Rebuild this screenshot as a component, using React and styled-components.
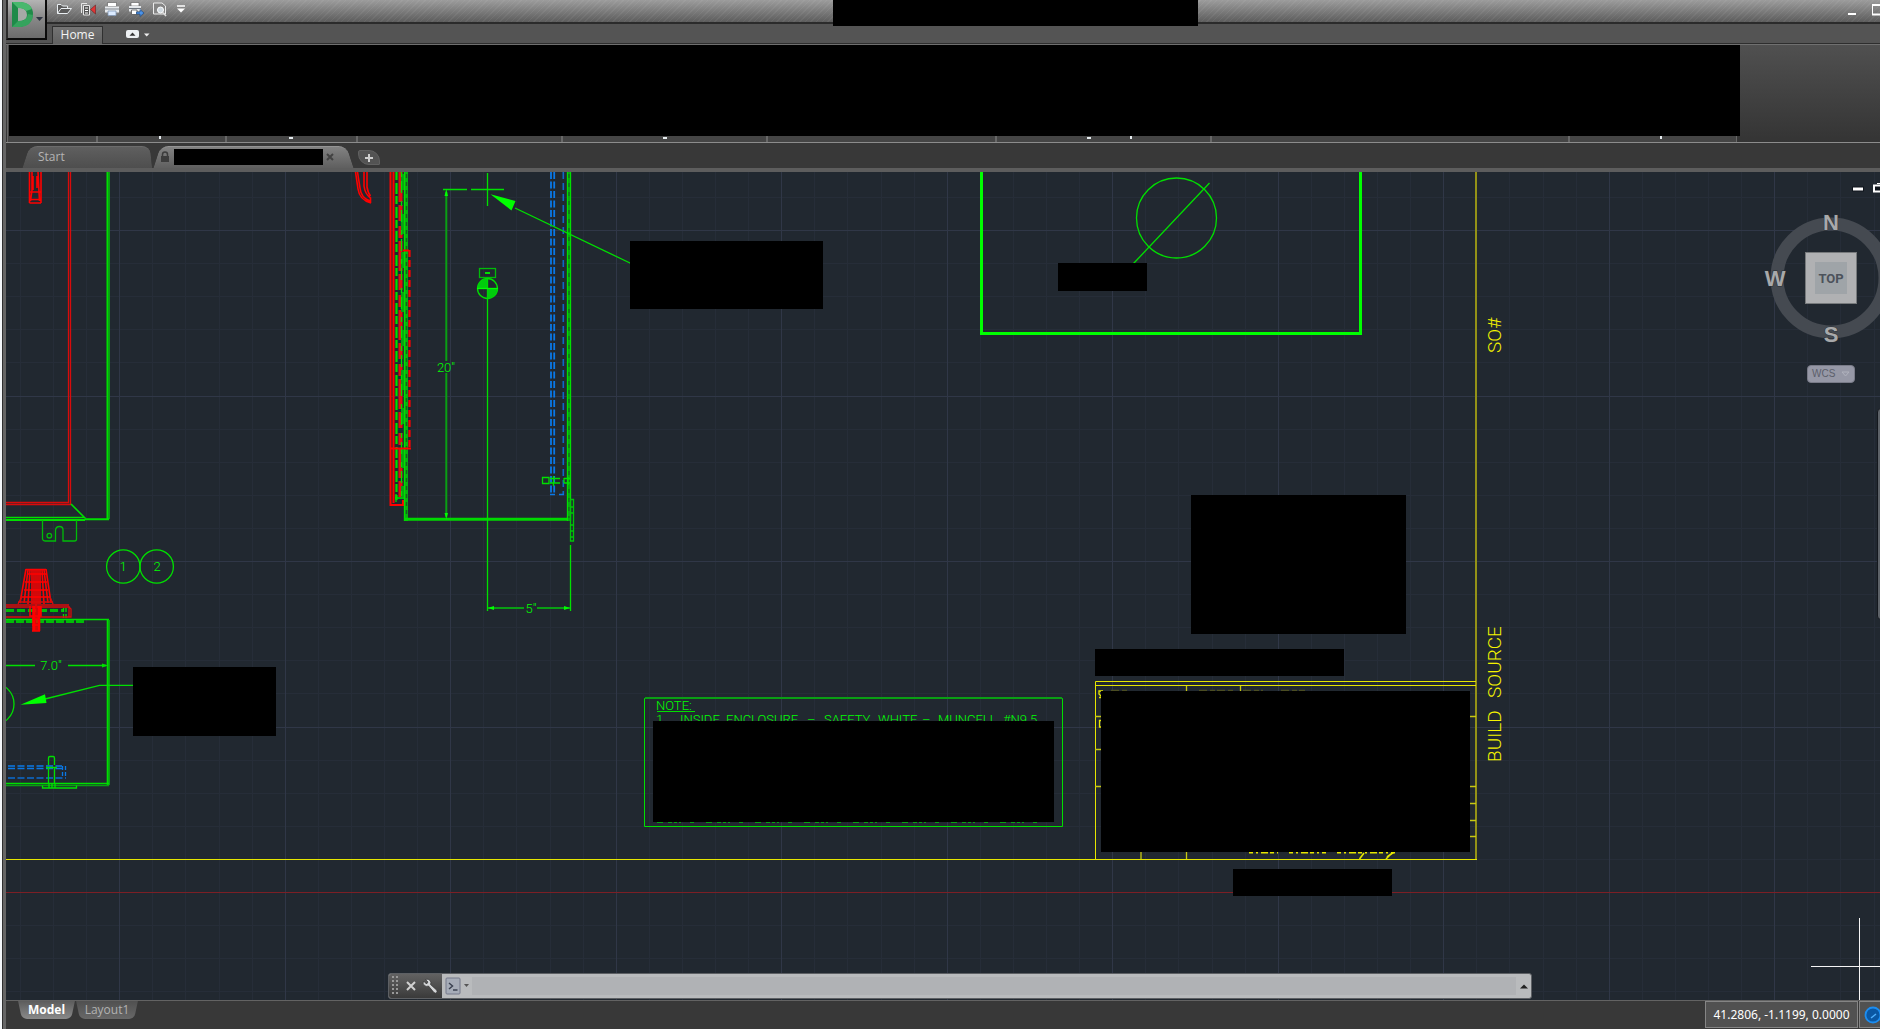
import React from "react";
import styled, { createGlobalStyle } from "styled-components";

const GlobalStyle = createGlobalStyle`
  * { box-sizing: border-box; }
  html, body { margin: 0; height: 100%; overflow: hidden; background: #383838; }
  #root { height: 100%; }
  button, input { font: inherit; color: inherit; border: 0; padding: 0; margin: 0; background: none; }
`;

const ui = `"Open Sans", "Noto Sans", sans-serif`;
const cad = `Roboto, "Liberation Sans", sans-serif`;

const Window = styled.div`
  display: flex;
  height: 100vh;
  overflow: hidden;
  font-family: ${ui};
  background: #383838;
`;

const DesktopEdge = styled.div`
  flex: 0 0 6px;
  border-right: 3px solid #666666;
  background: linear-gradient(90deg, #f4f7fa 0 2px, #303030 2px 3px);
`;

const Shell = styled.div`
  position: relative;
  flex: 1;
  min-width: 0;
  display: flex;
  flex-direction: column;
`;

const TitleBar = styled.header`
  flex: 0 0 24px;
  display: flex;
  justify-content: space-between;
  padding-left: 49px;
  border-bottom: 2px solid #2b2b2b;
  background:
    repeating-linear-gradient(135deg, rgba(255, 255, 255, 0.05) 0 1px, transparent 1px 4px),
    linear-gradient(#9c9c9c, #5c5c5c);
`;

const QuickAccess = styled.nav`
  display: flex;
  align-items: center;
  gap: 6px;
  height: 18px;
`;

const QuickButton = styled.button`
  width: ${(p) => (p.$narrow ? 12 : 18)}px;
  height: 18px;
  display: grid;
  place-items: center;
`;

const TitleCover = styled.div`
  position: absolute;
  left: 827px;
  top: 0;
  width: 365px;
  height: 26px;
  background: #000;
`;

const WindowControls = styled.div`
  display: flex;
  gap: 8px;
  margin-right: -12px;
`;

const WindowButton = styled.button`
  width: 20px;
  height: 20px;
`;

const RibbonTabs = styled.div`
  flex: 0 0 20px;
  display: flex;
  align-items: flex-end;
  gap: 22px;
  padding-left: 46px;
  background: #545454;
  border-bottom: 1px solid #2e2e2e;
`;

const RibbonTab = styled.button`
  width: 51px;
  height: 18px;
  margin-bottom: -1px;
  border: 1px solid #303030;
  border-bottom: 0;
  background: linear-gradient(#747474, #616161);
  color: #f4f4f4;
  font: 12px/14px ${ui};
  padding-bottom: 2px;
`;

const MinimizeRibbon = styled.button`
  width: 26px;
  height: 17px;
  svg { display: block; }
`;

const Ribbon = styled.section`
  flex: 0 0 98px;
  position: relative;
  display: flex;
  align-items: flex-end;
  padding-left: 1px;
  border-top: 1px solid #707070;
  background: linear-gradient(#505050, #343434);
`;

const RibbonPanel = styled.div`
  width: ${(p) => p.$width}px;
  height: 97px;
  flex: none;
  border: solid #686868;
  border-width: 0 1px;
  background: #454545;
`;

const RibbonCover = styled.div`
  position: absolute;
  left: 3px;
  top: 0;
  width: 1731px;
  height: 91px;
  background: #000;
`;

const LabelTail = styled.i`
  position: absolute;
  left: ${(p) => p.$left}px;
  bottom: 3px;
  width: ${(p) => (p.$wide ? 4 : 2)}px;
  height: ${(p) => (p.$wide ? 2 : 3)}px;
  background: #e6ecef;
`;

const FileTabs = styled.nav`
  flex: 0 0 30px;
  display: flex;
  align-items: flex-end;
  padding-left: 20px;
  border-top: 1px solid #8c8c8c;
  border-bottom: 4px solid #5d5d5d;
  background: #383838;
`;

const FileTab = styled.div`
  position: relative;
  z-index: 0;
  width: ${(p) => p.$width}px;
  height: 22px;
  display: flex;
  align-items: center;
  padding: 0 ${(p) => (p.$active ? 4 : 12)}px;
  font: 12px/20px ${ui};
  color: #b4b4b4;
  margin-right: 6px;
  &::before, &::after {
    content: "";
    position: absolute;
    z-index: -1;
    top: 0;
    bottom: 0;
    background: ${(p) => (p.$active ? "linear-gradient(#828282, #5f5f5f)" : "linear-gradient(#5f5f5f, #4e4e4e)")};
    border-top: 1px solid ${(p) => (p.$active ? "#949494" : "#6c6c6c")};
  }
  &::before { left: 0; right: 30px; transform: skewX(-18deg); border-radius: 8px 0 0 0; }
  &::after { right: 0; left: 24px; transform: skewX(${(p) => (p.$active ? 18 : 6)}deg); border-radius: 0 8px 0 0; }
`;

const TabButton = styled.button`
  flex: 1;
  height: 20px;
  display: flex;
  align-items: center;
  gap: 5px;
  text-align: left;
`;

const NameCover = styled.span`
  width: 149px;
  height: 16px;
  background: #000;
`;

const CloseButton = styled.button`
  width: 12px;
  height: 16px;
  display: grid;
  place-items: center;
  margin-right: 10px;
`;

const AddTab = styled.button`
  width: 22px;
  height: 15px;
  margin: 0 0 3px 2px;
  display: grid;
  place-items: center;
  border: 1px solid #606060;
  border-radius: 2px 11px 1px 11px;
  background: #535353;
`;

const Canvas = styled.main`
  position: relative;
  flex: 1;
  min-height: 0;
  overflow: hidden;
  background: #212830;
`;

const Drawing = styled.svg`
  position: absolute;
  inset: 0;
  width: 100%;
  height: 100%;
  font-family: ${cad};
  font-weight: 300;
`;

const ViewTools = styled.aside`
  position: absolute;
  top: 10px;
  right: -14px;
  width: 126px;
  display: flex;
  flex-direction: column;
  align-items: center;
`;

const ViewControls = styled.div`
  align-self: stretch;
  display: flex;
  gap: 8px;
  height: 17px;
  padding-left: 83px;
`;

const ViewButton = styled.button`
  width: 14px;
  height: 14px;
  svg { display: block; }
`;

const Cube = styled.svg`
  display: block;
  overflow: visible;
  font-family: "Liberation Sans", sans-serif;
  font-weight: bold;
`;

const WcsButton = styled.button`
  display: flex;
  align-items: center;
  justify-content: space-between;
  width: 48px;
  height: 18px;
  margin-top: 14px;
  padding: 0 4px;
  border: 1px solid #797b88;
  border-radius: 4px;
  background: #9698a6;
  color: #5c5f6b;
  font: 10px/16px "Liberation Sans", sans-serif;
`;

const NavigationBar = styled.div`
  position: absolute;
  top: 236px;
  right: -20px;
  width: 23px;
  height: 212px;
  border: 1px solid #14181e;
  border-radius: 4px;
  background: #5d6268;
`;

const CommandLine = styled.form`
  position: absolute;
  left: 382px;
  right: 348px;
  bottom: 1px;
  height: 26px;
  display: flex;
  border: 1px solid #5d6064;
  border-radius: 3px;
  overflow: hidden;
  background: #b9bbbd;
`;

const CommandTools = styled.div`
  flex: 0 0 53px;
  display: flex;
  align-items: center;
  gap: 8px;
  padding-left: 3px;
  background: linear-gradient(#626262, #3a3a3a);
  svg { flex: none; }
`;

const CommandButton = styled.button`
  display: grid;
  place-items: center;
  flex: none;
  width: ${(p) => p.$width}px;
  height: 24px;
`;

const CommandInput = styled.input`
  flex: 1;
  min-width: 0;
  align-self: center;
  height: 18px;
  background: #b0b2b5;
`;

const Footer = styled.footer`
  flex: 0 0 29px;
  display: flex;
  justify-content: space-between;
  border-top: 1px solid #636363;
  background: #383838;
  overflow: hidden;
`;

const LayoutTabs = styled.nav`
  display: flex;
  gap: 5px;
  padding-left: 14px;
`;

const LayoutTab = styled.button`
  position: relative;
  z-index: 0;
  height: 18px;
  width: ${(p) => p.$width}px;
  color: ${(p) => (p.$active ? "#ffffff" : "#b2b2b2")};
  font: ${(p) => (p.$active ? "bold" : "normal")} 12px/18px ${ui};
  &::before, &::after {
    content: "";
    position: absolute;
    z-index: -1;
    top: 0;
    bottom: 0;
    background: ${(p) => (p.$active ? "linear-gradient(#5c5c5c, #8a8a8a)" : "linear-gradient(#505050, #686868)")};
  }
  &::before { left: 0; right: 16px; transform: skewX(12deg); border-radius: 0 0 0 5px; }
  &::after { right: 0; left: 16px; transform: skewX(-12deg); border-radius: 0 0 5px 0; }
`;

const Status = styled.div`
  display: flex;
  gap: 1px;
  margin-right: -11px;
`;

const StatusCell = styled.button`
  height: 27px;
  width: ${(p) => p.$width}px;
  border: 1px solid #858585;
  background: #515151;
  color: #fff;
  font: 12px/24px "Noto Sans", sans-serif;
  white-space: nowrap;
  svg { display: block; margin-left: 4px; }
`;

const AppMenuSlot = styled.div`
  position: absolute;
  left: 0;
  top: 0;
`;

const AppButton = styled.button`
  display: block;
  width: 41px;
  height: 40px;
  border: 2px solid #0c0c0c;
  border-top: 0;
  border-left-color: #2a2a2a;
  background: linear-gradient(#b4b4b4, #8a8a8a 45%, #6c6c6c);
  svg { display: block; }
`;

const G = "#00e000";
const BG = "#00ff00";
const DG = "#0a9e14";
const Y = "#e6e600";
const DY = "#949217";
const R = "#ff0000";
const B = "#0a78e6";

const range = (n) => Array.from({ length: n }, (_, i) => i);

function Grid() {
  const step = 33.1;
  const draw = (major) => {
    let d = "";
    range(90).forEach((i) => {
      if ((i % 5 === 0) !== major) return;
      d += `M${Math.round(119.2 + (i - 5) * step) + 0.5} 172V1600`;
      if (i < 60) d += `M0 ${Math.round(230 + (i - 5) * step) + 0.5}H3200`;
    });
    return d;
  };
  return (
    <g fill="none">
      <path d={draw(false)} stroke="#262d38" />
      <path d={draw(true)} stroke="#303747" />
    </g>
  );
}

function LeftParts() {
  return (
    <g fill="none" strokeWidth="1.3">
      <g stroke={R} strokeWidth="1.6">
        <path d="M29.500 172V203M32 172V190L30.500 201M38 172L39.500 201M41 172V203M33 176V190M37 176V188M29.500 192H41M31 199.500H39.500M29.500 203H41" />
        <path d="M68.500 172V502.500H6M70.500 172V504.500H6" stroke="#d90b0b" strokeWidth="1.300" />
      </g>
      <path d="M109 172V519" stroke={DG} strokeWidth="2" />
      <path d="M107.300 172V519" stroke={G} strokeWidth="1.600" />
      <path d="M6 517.500H85M71 504L85.500 518.500" stroke={G} strokeWidth="1.600" />
      <path d="M6 520H85M85 519.300H109" stroke={G} strokeWidth="2" />
      <path d="M42.500 520V539Q43 541 45 541H55.500V530Q56 526.500 59.500 526.500T63 530V541H74.500Q76.500 541 76.500 539V520" stroke="#00bc08" />
      <circle cx="49.300" cy="535.700" r="2.300" stroke="#00bc08" />
      <circle cx="123.300" cy="566.500" r="16.700" stroke={G} />
      <circle cx="156.700" cy="566.500" r="16.700" stroke={G} />

      <g stroke={G}>
        <path d="M6 610.500H64" stroke="#00bc08" strokeWidth="3" strokeDasharray="8 3" />
        <path d="M6 619.500H109" />
        <path d="M6 621.500H86" stroke="#00bc08" strokeWidth="3" strokeDasharray="8 2" />
        <path d="M63.500 608V620M66 608V618" strokeDasharray="4 2" />
      </g>
      <g stroke={R} strokeWidth="1.600">
        <path d="M26 569.500H46M26 569L20 603M46 569L51 603M28 570L24 603M44 570L48 603M30 570L28 604M42 570L44 604M32 569V604M34 569V604M36 569V631M38 569V604M40 569V604M27 574H46M25 582H47M24 590H48M22 597H50" />
        <path d="M22 597L18 604M50 597L53 604M18 602H53M6 605H69M6 607H69L71 609V617H6M69 606V617" stroke="#d90b0b" strokeWidth="1.300" />
        <path d="M30 606V616H41V606M33 606V631M34.500 606V631M38 606V631M39.500 606V631M32 631H40M32 619H40M32 625H40" />
      </g>
      <path d="M109 620V785" stroke={DG} strokeWidth="2" />
      <path d="M107.500 620V785M6 783.500H109" stroke={G} strokeWidth="1.600" />
      <path d="M6 785.500H109" stroke={DG} />
      <path d="M6 665.500H35M68 665.500H106" stroke={G} />
      <path d="M102 663.500L108 665.500L102 667.500Z" fill={G} />
      <path d="M45 699L99.500 685.300H133" stroke={G} />
      <path d="M20.500 704.800L45 694.300L46.500 703Z" fill={BG} />
      <circle cx="-7" cy="704" r="21" stroke={G} />
      <g stroke={B}>
        <path d="M8 766H62M8 768.500H62" strokeWidth="1.600" strokeDasharray="7 2.500" />
        <path d="M8 778H66" stroke="#105aa8" strokeWidth="1.800" strokeDasharray="7 2.500" />
        <path d="M62.500 766V778M65.500 766V778" strokeDasharray="4 2" />
      </g>
      <path d="M48.500 765V758Q48.500 756.500 50 756.500H53Q54.500 756.500 54.500 758V765M46 767.500H57M48.500 768V784M54.500 768V784M42.500 785.500V788H76.500V785.500M49 783V788M52 783V788M55 783V788" stroke={G} />
    </g>
  );
}

function CenterParts() {
  return (
    <g fill="none" strokeWidth="1.300">
      <path d="M355.500 172L358 189Q359.500 200 371 203M357.500 172L360 188Q361 198 370 201M364 172V186Q365 194 370.500 198V203M367 172V187Q368 193 370.500 196" stroke={R} strokeWidth="1.600" />
      <path d="M390.500 172V505H403V500M393.500 172V503" stroke={R} strokeWidth="2" />
      <path d="M396.500 172V500" stroke={G} strokeWidth="2.200" strokeDasharray="8 3 11 2" />
      <path d="M400.500 172V498" stroke="#e01010" strokeWidth="4" strokeDasharray="30 3 16 5 12 3" />
      <path d="M402.500 174V497" stroke={DG} strokeWidth="3" strokeDasharray="16 24 20 18" />
      <path d="M401.500 172V497" stroke={G} strokeDasharray="5 4 12 8" />
      <path d="M406 172V521" stroke="#08b010" strokeWidth="4" />
      <path d="M404.500 172V521" stroke={G} />
      <path d="M406.500 174V518" stroke="#17601f" strokeWidth="1.500" strokeDasharray="4 4" />
      <path d="M409.500 250V450" stroke={R} strokeWidth="2.200" strokeDasharray="7 3" />
      <path d="M390 448.500H411M403 250.500H409" stroke={R} strokeWidth="1.800" />
      <path d="M395 498H405M396 494V502" stroke={G} />
      <path d="M404 519.300H570" stroke="#00d800" strokeWidth="3" />
      <path d="M569 172V521" stroke={DG} strokeWidth="3.500" />
      <path d="M567.500 172V521M570.500 172V521" stroke={G} />
      <path d="M569 174V518" stroke="#17601f" strokeDasharray="4 5" />
      <g stroke={B}>
        <path d="M551 172V495M554.200 172V495" strokeWidth="1.800" strokeDasharray="7 2.500" />
        <path d="M563.300 172V495" stroke="#0d68c6" strokeWidth="1.600" strokeDasharray="7 4" />
        <path d="M550 494.500H564" strokeDasharray="5 4" />
      </g>
      <path d="M542.500 477.500H549V483.500H542.500ZM550 478.500H560M550 483H560M553.500 476V486M564 478.500H570M564 483H570M564 478V483M568 477V485" stroke={G} />
      <path d="M570.500 499.500H573.500V541H570.500ZM571 507H573M571 513H573M571 525H573M571 531H573M571 537H573" stroke="#00c408" />

      <path d="M446.300 192V361M446.300 373V517" stroke={DG} strokeWidth="2" />
      <path d="M443 189.500H467M471 189.500H504M487.500 173V206M487.500 278V611M570.500 545V611" stroke={G} />
      <path d="M446.300 189L448 196H444.500ZM446.300 519L448 513H444.500Z" fill={BG} />
      <path d="M515 208L631 263.500" stroke={G} />
      <path d="M490.500 194.300L515.500 201L511.500 210.500Z" fill={BG} />
      <rect x="479.500" y="268.500" width="16" height="9" stroke="#00bc08" />
      <path d="M485 273H490" stroke={G} strokeWidth="2" />
      <circle cx="487.500" cy="288.500" r="10" stroke={G} />
      <path d="M487.500 288.500V278.500A10 10 0 0 0 477.500 288.500ZM487.500 288.500V298.500A10 10 0 0 0 497.500 288.500Z" fill="#00cc0c" />
      <path d="M477 288.500H498" stroke={BG} />
      <path d="M488 608H524M537 608H570" stroke={DG} strokeWidth="2" />
      <path d="M488 608L494 606V610ZM570 608L564 606V610Z" fill={BG} />
    </g>
  );
}

function RightParts() {
  return (
    <g fill="none" strokeWidth="1.300">
      <path d="M981.500 172V333.500H1360.500V172" stroke={BG} strokeWidth="3" />
      <circle cx="1176.500" cy="218" r="40" stroke={G} />
      <path d="M1133.500 263.500L1209.500 183" stroke={G} />
      <path d="M1476 172V859" stroke={DY} strokeWidth="2" />
      <path d="M6 859.500H1477M1095.500 859V681.500H1476M1095.500 685.500H1476" stroke={Y} strokeWidth="1" />
      <path d="M1186.500 686V859M1240.500 686V692M1141 852V859M1095 716.500H1102M1095 749.500H1102M1095 786.500H1102M1469 716.500H1476M1469 786.500H1476M1469 803.500H1476M1469 820.500H1476M1469 836.500H1476" stroke="#c8c812" />
      <path d="M1103 691H1099V694L1102 697M1099 697.500H1102M1102 720.500H1099.500V727H1102" stroke={Y} />
      <path d="M1111 690.500H1129M1199 690.500H1233M1243 690.500H1263M1281 690.500H1305" stroke="#4b4d22" strokeDasharray="8 3 5 2" />
      <path d="M1249 852.500H1278M1289 852.500H1326M1337 852.500H1395" stroke={Y} strokeWidth="2" strokeDasharray="4 3 2 3 7 2" />
      <path d="M1364 853L1359.500 859M1392 853L1386 859M1394 852L1387 857" stroke={Y} strokeWidth="1.600" />
    </g>
  );
}

const covers = [
  [630, 241, 193, 68],
  [1058, 263, 89, 28],
  [1191, 495, 215, 139],
  [1095, 649, 249, 27],
  [1101, 691, 369, 161],
  [1233, 869, 159, 27],
  [653, 721, 401, 101],
  [133, 667, 143, 69],
];

const noteLine = [
  [656, "1."], [680, "INSIDE"], [726, "ENCLOSURE"], [807, "–"], [824, "SAFETY"],
  [878, "WHITE"], [922, "–"], [938, "MUNCELL"], [1003, "#N9.5"],
];

function Sheet() {
  return (
    <Drawing role="img" aria-label="Enclosure drawing">
      <g transform="translate(-6 -172)">
        <Grid />
        <path d="M0 892.500H3200" stroke="#7c1f25" />
        <LeftParts />
        <CenterParts />
        <RightParts />
        <path d="M644.500 698.500H1062.500V826.500H644.500Z" fill="none" stroke={G} />
        <path d="M645 698H1062" stroke={DG} strokeWidth="2" />
        <path d="M657 711.500H695" stroke={G} />
        <path d="M657 822.500H1046" stroke={DG} strokeDasharray="6 5 4 2 3 2 2 9 4 12" />
        <g fill={BG} fontSize="13">
          <text x="656" y="710">NOTE:</text>
          <text y="724">
            {noteLine.map(([x, word]) => <tspan key={x} x={x}>{word}</tspan>)}
          </text>
          <text x="123" y="571" textAnchor="middle">1</text>
          <text x="157" y="571" textAnchor="middle">2</text>
          <text x="51" y="670" textAnchor="middle">7.0"</text>
          <text x="446" y="372" textAnchor="middle">20"</text>
          <text x="531" y="613" textAnchor="middle">5"</text>
        </g>
        <g fill="#f4f400" fontSize="19">
          <text transform="translate(1501 353) rotate(-90)">SO#</text>
          <text transform="translate(1501 762) rotate(-90)">BUILD</text>
          <text transform="translate(1501 698) rotate(-90)">SOURCE</text>
        </g>
        {covers.map(([x, y, w, h]) => <rect key={`${x}-${y}`} x={x} y={y} width={w} height={h} fill="#000" />)}
        <path d="M1859.500 918V1000M1811 966.500H1960" stroke="#f5f5f5" />
      </g>
    </Drawing>
  );
}

const quickIcons = [
  ["Open", <path key="a" d="M1.500 12.500V3.500H5L6.500 5H11.500V7M1.500 12.500L5 7.500H15.500L11.500 12.500Z" fill="#5a5a5a" stroke="#e9eef2" />],
  ["Import", <g key="b"><path d="M1.500 2.500H7M1.500 2.500V12M3.500 4.500H9.500V14H3.500Z" fill="#555" stroke="#e6e6e6" /><path d="M5 7H8M5 9.500H8M5 12H8" stroke="#fff" /><path d="M10.500 8.500L15.500 4V13Z" fill="#e03434" stroke="#5b1717" strokeWidth=".5" /></g>],
  ["Plot", <g key="c"><path d="M3.500 1.500H12.500V5.500H3.500Z" fill="#fff" stroke="#555" strokeWidth=".6" /><path d="M1 5.500H15V11.500H1Z" fill="#e6e9ec" /><path d="M1 8H15" stroke="#7e858d" /><path d="M4 10H12V14.500H4Z" fill="#dcebff" stroke="#8197b4" strokeWidth=".8" /></g>],
  ["Batch Plot", <g key="d"><path d="M3 1.500H11V5H3Z" fill="#fff" stroke="#555" strokeWidth=".6" /><path d="M1 5H13V10.500H1Z" fill="#e3e6e9" /><path d="M1 7.500H13" stroke="#6d747c" /><path d="M3.500 9H9V13.500H3.500Z" fill="#fff" stroke="#555" strokeWidth=".8" /><path d="M8.500 11H12V8.500L16 12L12 15.500V13H8.500Z" fill="#4c93e8" stroke="#214a83" strokeWidth=".7" /></g>],
  ["Plot Preview", <g key="e"><path d="M1.500 2H10L13.500 5V13H1.500Z" fill="#858585" stroke="#ececec" /><circle cx="8.500" cy="9" r="3" fill="#cfd8df" stroke="#fff" /><path d="M11 11.500L14 15" stroke="#ddd" strokeWidth="1.500" /></g>],
];

const panels = [90, 129, 131, 205, 205, 229, 215, 358, 168];

function AppMenu() {
  return (
    <AppMenuSlot>
      <AppButton aria-label="Application menu">
        <svg width="37" height="38">
          <path d="M4 2H13Q25 4 25 14T13 27H4Z" fill="#1f8a49" />
          <path d="M10 8H13Q19 9 19 15T10 21Z" fill="#a5a9a6" />
          <path d="M4 2H13Q22 3 24 9L18 11Q16 8 10 8Z" fill="#49b86d" />
          <path d="M4 27L10 21H13Q19 20 20 14L25 15Q24 26 13 27Z" fill="#35a35d" />
          <path d="M28 17H35L31.500 21Z" fill="#2e3442" />
        </svg>
      </AppButton>
    </AppMenuSlot>
  );
}

export default function App() {
  return (
    <Window>
      <GlobalStyle />
      <DesktopEdge />
      <Shell>
        <TitleBar>
          <QuickAccess aria-label="Quick access">
            {quickIcons.map(([name, icon]) => (
              <QuickButton key={name} aria-label={name}>
                <svg width="16" height="16" fill="none">{icon}</svg>
              </QuickButton>
            ))}
            <QuickButton $narrow aria-label="Customize">
              <svg width="8" height="8"><path d="M0 1H8" stroke="#fff" strokeWidth="1.500" /><path d="M0 3.500H8L4 7.500Z" fill="#fff" /></svg>
            </QuickButton>
          </QuickAccess>
          <WindowControls>
            <WindowButton aria-label="Minimize"><svg width="20" height="20"><path d="M4 14H12" stroke="#fff" strokeWidth="2" /></svg></WindowButton>
            <WindowButton aria-label="Maximize"><svg width="20" height="20"><path d="M0 5H17V14.500H0Z" fill="none" stroke="#fff" strokeWidth="2" /></svg></WindowButton>
          </WindowControls>
        </TitleBar>
        <RibbonTabs>
          <RibbonTab>Home</RibbonTab>
          <MinimizeRibbon aria-label="Minimize ribbon">
            <svg width="26" height="16"><rect x="1" y="3" width="13" height="8" rx="2" fill="#edf0f2" /><path d="M4.500 8.800L7.500 5.500L10.500 8.800Z" fill="#333" /><path d="M19 6.500H24.500L21.700 9.500Z" fill="#eee" /></svg>
          </MinimizeRibbon>
        </RibbonTabs>
        <TitleCover />
        <AppMenu />
        <Ribbon aria-label="Ribbon">
          {panels.map((w, i) => <RibbonPanel key={i} $width={w} />)}
          <RibbonCover />
          {[153, 1124, 1654].map((x) => <LabelTail key={x} $left={x} />)}
          {[283, 657, 1081].map((x) => <LabelTail key={x} $left={x} $wide />)}
        </Ribbon>
        <FileTabs aria-label="Files">
          <FileTab $width={125}><TabButton>Start</TabButton></FileTab>
          <FileTab $width={193} $active>
            <TabButton aria-label="Open drawing">
              <svg width="8" height="12"><path d="M1.500 5V3.500Q1.500 1 4 1T6.500 3.500V5" fill="none" stroke="#3c3c3c" strokeWidth="1.500" /><rect y="5" width="8" height="6" fill="#3c3c3c" /></svg>
              <NameCover />
            </TabButton>
            <CloseButton aria-label="Close tab"><svg width="8" height="8"><path d="M1 1L7 7M7 1L1 7" stroke="#424242" strokeWidth="2" /></svg></CloseButton>
          </FileTab>
          <AddTab aria-label="New tab"><svg width="8" height="8"><path d="M4 0V8M0 4H8" stroke="#cfcfcf" strokeWidth="2" /></svg></AddTab>
        </FileTabs>
        <Canvas>
          <Sheet />
          <ViewTools>
            <ViewControls>
              <ViewButton aria-label="Minimize view"><svg width="14" height="14"><rect x="1.500" y="5" width="11" height="4" fill="#fff" stroke="#10151c" /></svg></ViewButton>
              <ViewButton aria-label="Restore view"><svg width="14" height="14"><path d="M4 1.500H12V8" fill="none" stroke="#fff" /><rect x="1" y="3.500" width="7" height="6" fill="#10151c" stroke="#fff" strokeWidth="2" /></svg></ViewButton>
            </ViewControls>
            <Cube width="126" height="152" role="img" aria-label="View cube">
              <circle cx="63" cy="79" r="54" fill="none" stroke="#454a51" strokeWidth="13" />
              <rect x="37.500" y="53.500" width="51" height="51" fill="#b0b1b3" stroke="#777a7c" />
              <rect x="47" y="63" width="32" height="32" fill="#9fa4a8" />
              <g textAnchor="middle" fill="#a8a9aa" fontSize="22" stroke="#2b3036" strokeWidth="1" paintOrder="stroke">
                <text x="63" y="31">N</text>
                <text x="7" y="87">W</text>
                <text x="63" y="143">S</text>
              </g>
              <text x="63" y="84" textAnchor="middle" fill="#4c525b" fontFamily="Roboto" fontSize="13">TOP</text>
            </Cube>
            <WcsButton>WCS<svg width="9" height="6"><path d="M1 1H8L4.500 5Z" fill="none" stroke="#b0b2bd" /></svg></WcsButton>
          </ViewTools>
          <NavigationBar />
          <CommandLine>
            <CommandTools>
              <svg width="6" height="20"><path d="M1 0V20M5 0V20" stroke="#999" strokeWidth="2" strokeDasharray="2 2" /></svg>
              <CommandButton type="button" $width={8} aria-label="Close"><svg width="10" height="10"><path d="M1 1L9 9M9 1L1 9" stroke="#d0d0d0" strokeWidth="2" /></svg></CommandButton>
              <CommandButton type="button" $width={16} aria-label="Customize command line"><svg width="16" height="16"><path d="M1.500 3Q.500 6 2.500 7.500Q4.500 9 6.500 8L12 14.500Q14 16 15 14Q15.500 13 14.500 12L8.500 6.500Q9.500 4 8 2.500Q6.500 .500 3.500 1.500L6 4L4.500 6Z" fill="#d4d6d8" stroke="#2a2a2a" strokeWidth=".6" /></svg></CommandButton>
            </CommandTools>
            <CommandButton type="button" $width={30} aria-label="Recent commands">
              <svg width="24" height="18"><rect x="1" y="1" width="14" height="16" rx="1" fill="#a6acb8" stroke="#75798a" /><path d="M4 6L7.500 9L4 12M8 13H12.500" fill="none" stroke="#3c4252" strokeWidth="1.500" /><path d="M19 7H24L21.500 10Z" fill="#555" /></svg>
            </CommandButton>
            <CommandInput aria-label="Command" />
            <CommandButton type="button" $width={15} aria-label="Command history"><svg width="8" height="5"><path d="M0 4.500L4 .5L8 4.500Z" fill="#222" /></svg></CommandButton>
          </CommandLine>
        </Canvas>
        <Footer>
          <LayoutTabs>
            <LayoutTab $active $width={53}>Model</LayoutTab>
            <LayoutTab $width={58}>Layout1</LayoutTab>
          </LayoutTabs>
          <Status>
            <StatusCell $width={153}>41.2806, -1.1199, 0.0000</StatusCell>
            <StatusCell $width={32} aria-label="Drawing mode"><svg width="18" height="18"><circle cx="9" cy="9" r="7.500" fill="#0a57a3" stroke="#1c8df0" strokeWidth="1.800" /><path d="M7 12L12 8" stroke="#4fb0ff" strokeWidth="1.500" /></svg></StatusCell>
          </Status>
        </Footer>
      </Shell>
    </Window>
  );
}
